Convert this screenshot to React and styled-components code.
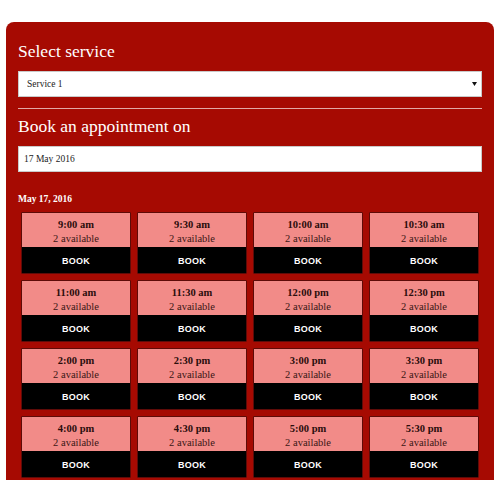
import React from 'react';
import styled, { createGlobalStyle } from 'styled-components';

const Global = createGlobalStyle`
  body {
    margin: 0;
    background: #fff;
    font-family: "Liberation Serif", "Times New Roman", serif;
  }
`;

const Panel = styled.div`
  margin: 22px 6px 0 6px;
  background: #a60a02;
  border-radius: 8px 8px 0 0;
  padding: 19px 12px 2px 12px;
  color: #fff;
`;

const Heading = styled.h2`
  margin: 0;
  font-size: 17.5px;
  font-weight: normal;
  line-height: 20px;
`;

const Field = styled.div`
  margin-top: ${p => p.$top}px;
  height: 24px;
  background: #fff;
  border: 1px solid #c9c9c9;
  color: #222;
  font-size: 9.5px;
  display: flex;
  align-items: center;
  justify-content: space-between;
  padding: 0 4px 0 ${p => p.$indent}px;
`;

const Arrow = styled.svg`
  width: 5px;
  height: 4px;
`;

const Divider = styled.hr`
  margin: 11px 0 7px 0;
  border: 0;
  height: 1px;
  background: #e3a9a6;
`;

const DayLabel = styled.div`
  margin-top: 21px;
  font-size: 9.5px;
  font-weight: bold;
  line-height: 12px;
`;

const Grid = styled.div`
  margin-top: 7px;
  padding: 0 3px;
  display: grid;
  grid-template-columns: repeat(4, 110px);
  column-gap: 6px;
  row-gap: 6px;
`;

const Card = styled.div`
  height: 62px;
  box-sizing: border-box;
  border: 1px solid #5e0b08;
  border-radius: 1px;
  display: flex;
  flex-direction: column;
  overflow: hidden;
`;

const Info = styled.div`
  background: #f28b88;
  color: #3a1614;
  text-align: center;
  padding-top: 5px;
  height: 34px;
  flex: none;
  box-sizing: border-box;
  font-size: 10.5px;
  line-height: 14px;
`;

const Time = styled.div`
  font-weight: bold;
  color: #2a0d0c;
`;

const BookButton = styled.button`
  flex: 1;
  border: 0;
  margin: 0;
  background: #000;
  color: #fff;
  font-family: "Liberation Sans", Arial, sans-serif;
  font-weight: bold;
  font-size: 9px;
  letter-spacing: 0.3px;
  padding: 2px 0 0 0;
`;

const slots = [
  '9:00 am', '9:30 am', '10:00 am', '10:30 am',
  '11:00 am', '11:30 am', '12:00 pm', '12:30 pm',
  '2:00 pm', '2:30 pm', '3:00 pm', '3:30 pm',
  '4:00 pm', '4:30 pm', '5:00 pm', '5:30 pm',
];

export default function App() {
  return (
    <>
      <Global />
      <Panel>
        <Heading>Select service</Heading>
        <Field $top={10} $indent={8}>
          <span>Service 1</span>
          <Arrow viewBox="0 0 5 4">
            <path d="M0 0 L5 0 L2.5 4 Z" fill="#111" />
          </Arrow>
        </Field>
        <Divider />
        <Heading>Book an appointment on</Heading>
        <Field $top={10} $indent={5}>
          <span>17 May 2016</span>
        </Field>
        <DayLabel>May 17, 2016</DayLabel>
        <Grid>
          {slots.map(t => (
            <Card key={t}>
              <Info>
                <Time>{t}</Time>
                <div>2 available</div>
              </Info>
              <BookButton>BOOK</BookButton>
            </Card>
          ))}
        </Grid>
      </Panel>
    </>
  );
}
